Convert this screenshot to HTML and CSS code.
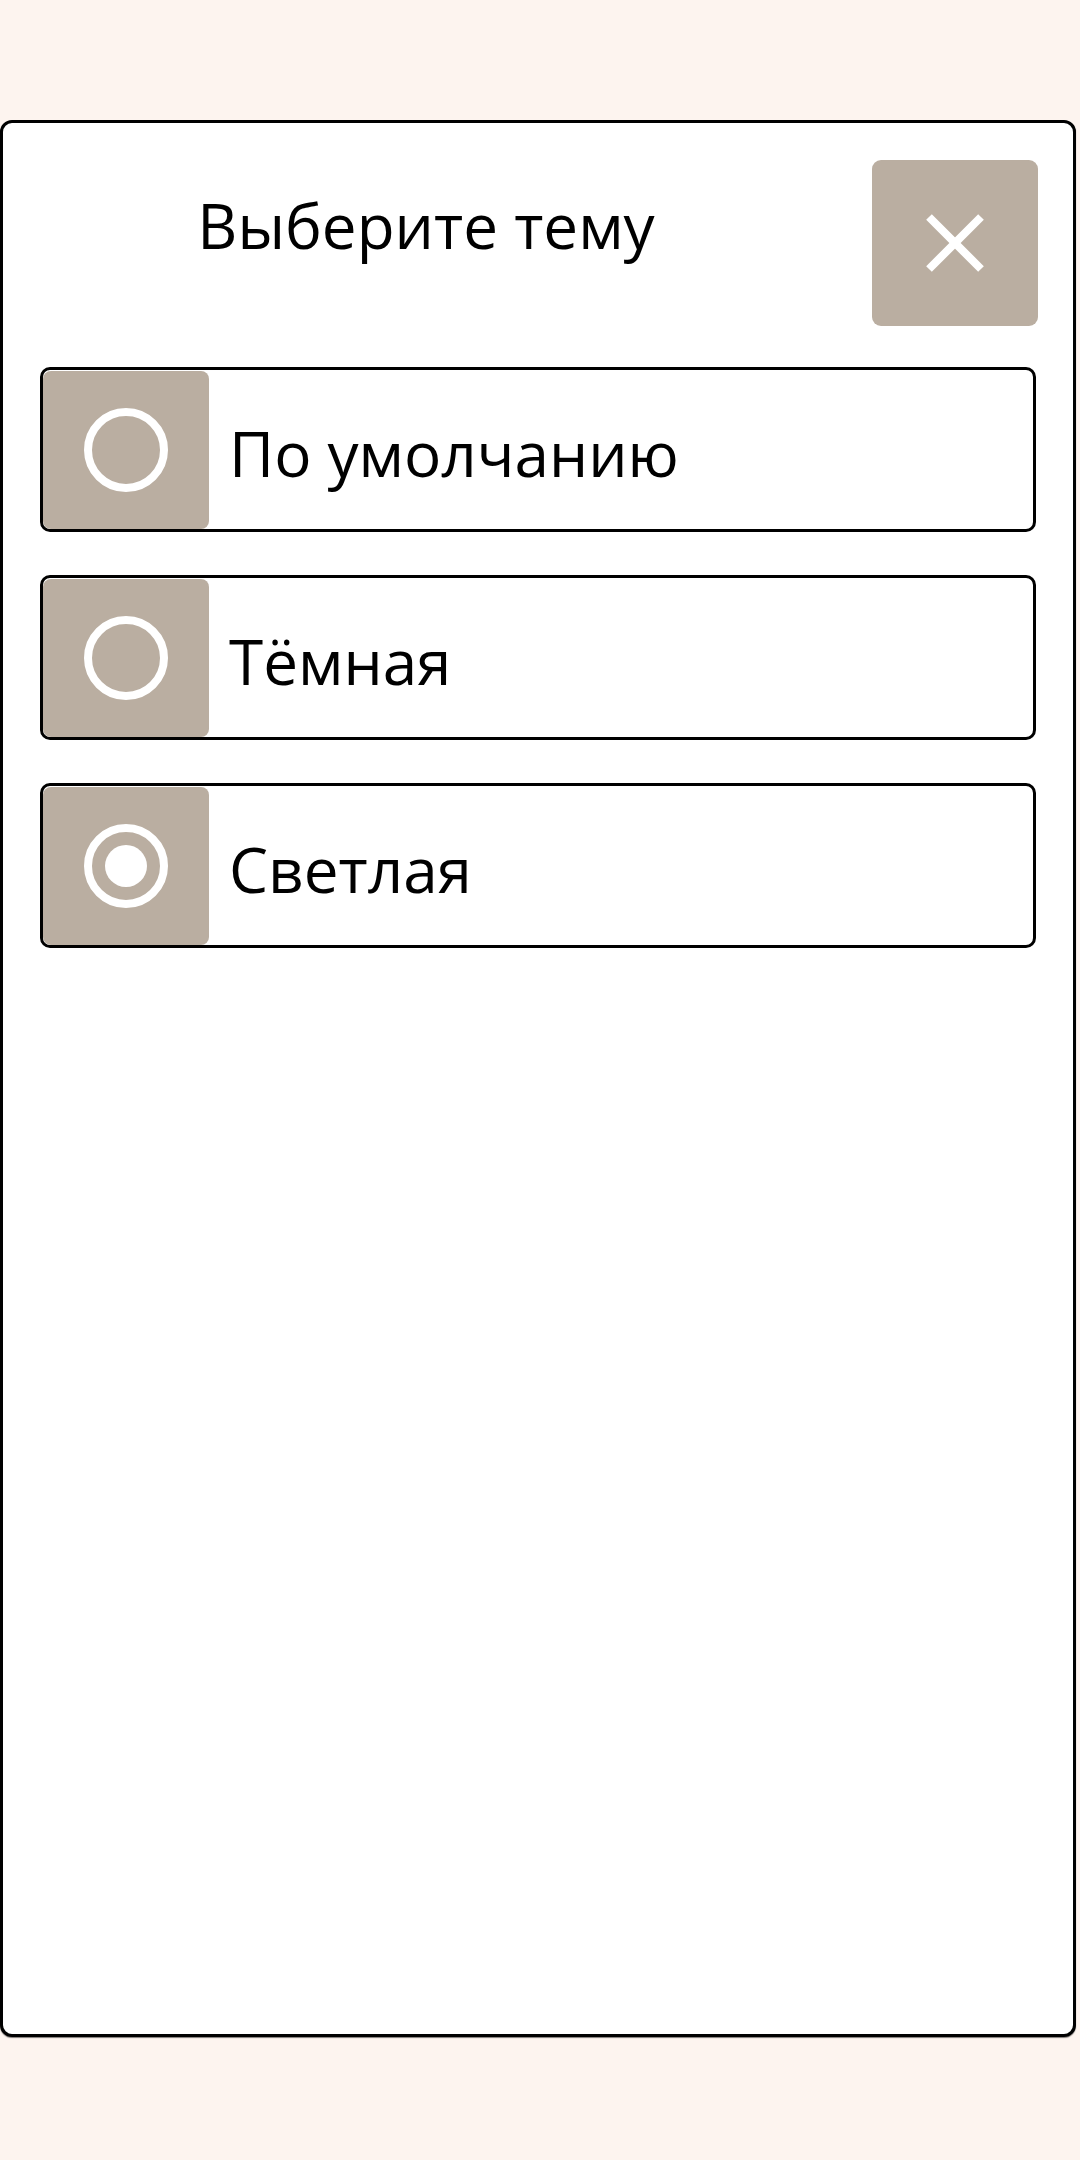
FILE: index.html
```html
<!DOCTYPE html>
<html lang="ru">
<head>
<meta charset="utf-8">
<title>Выберите тему</title>
<link rel="stylesheet" href="styles.css">
</head>
<body>
<div class="card">
  <div class="header">
    <div class="title">Выберите тему</div>
    <button class="close" aria-label="Закрыть">
      <svg width="58" height="58" viewBox="0 0 58 58"><path d="M3 3 L55 55 M55 3 L3 55" stroke="#fff" stroke-width="8" fill="none"/></svg>
    </button>
  </div>
  <div class="options">
    <div class="option">
      <div class="radio-box">
        <svg width="84" height="84" viewBox="0 0 84 84"><circle cx="42" cy="42" r="38" stroke="#fff" stroke-width="8" fill="none"/></svg>
      </div>
      <div class="label">По умолчанию</div>
    </div>
    <div class="option">
      <div class="radio-box">
        <svg width="84" height="84" viewBox="0 0 84 84"><circle cx="42" cy="42" r="38" stroke="#fff" stroke-width="8" fill="none"/></svg>
      </div>
      <div class="label">Тёмная</div>
    </div>
    <div class="option">
      <div class="radio-box">
        <svg width="84" height="84" viewBox="0 0 84 84"><circle cx="42" cy="42" r="38" stroke="#fff" stroke-width="8" fill="none"/><circle cx="42" cy="42" r="21" fill="#fff"/></svg>
      </div>
      <div class="label">Светлая</div>
    </div>
  </div>
</div>
</body>
</html>
```

FILE: styles.css
```css
* { box-sizing: border-box; }
html, body {
  margin: 0;
  padding: 0;
  background: #fdf4ef;
  font-family: "Open Sans", "Noto Sans", sans-serif;
  color: #000;
}
body {
  width: 1080px;
  height: 2160px;
  padding-top: 120px;
}
.card {
  width: 1076px;
  height: 1917px;
  background: #fff;
  border: 3px solid #000;
  border-radius: 12px;
  box-shadow: 0 1px 1px rgba(0,0,0,0.5);
  padding: 37px 37px;
}
.header {
  display: flex;
  align-items: flex-start;
  height: 166px;
}
.title {
  flex: 1;
  text-align: center;
  font-size: 62px;
  line-height: 68px;
  padding-top: 31px;
  padding-right: 60px;
}
.close {
  width: 166px;
  height: 166px;
  background: #baaea1;
  border: none;
  border-radius: 9px;
  display: flex;
  align-items: center;
  justify-content: center;
  padding: 0;
  margin-right: -2px;
}
.close svg { display: block; }
.options {
  margin-top: 41px;
  display: flex;
  flex-direction: column;
  gap: 43px;
}
.option {
  display: flex;
  align-items: stretch;
  height: 165px;
  border: 3px solid #000;
  border-radius: 10px;
  padding: 1px 0 0 0;
}
.radio-box {
  width: 166px;
  background: #baaea1;
  border-radius: 8px;
  display: flex;
  align-items: center;
  justify-content: center;
}
.radio-box svg { display: block; }
.label {
  display: flex;
  align-items: center;
  margin-left: 20px;
  padding-top: 5px;
  font-size: 62px;
}
```
